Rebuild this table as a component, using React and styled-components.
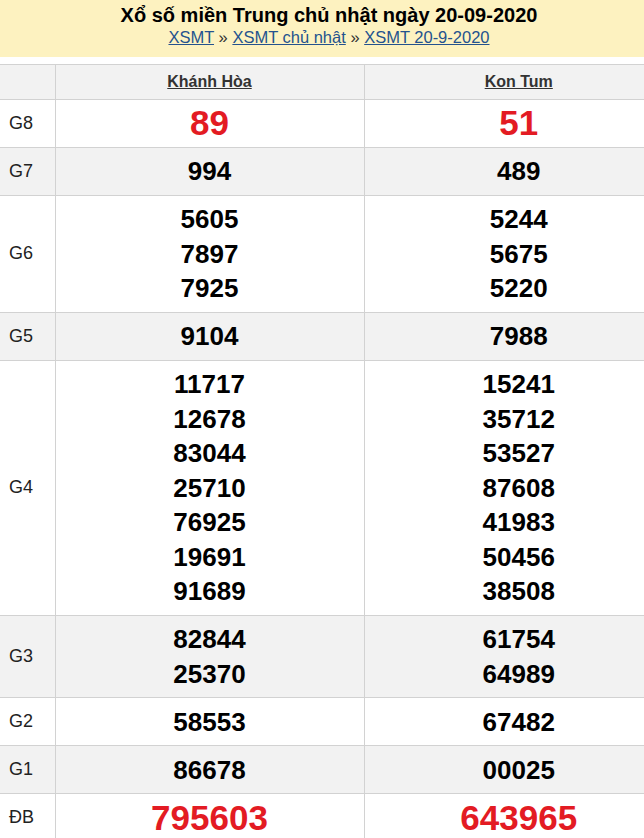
import React from "react";
import styled, { createGlobalStyle } from "styled-components";

const Global = createGlobalStyle`
  html, body { margin: 0; padding: 0; background: #fff; overflow: hidden; }
  body { font-family: Arial, "Liberation Sans", sans-serif; }
`;

const Page = styled.div`
  width: 673px;
`;

const Header = styled.header`
  width: 658px;
  height: 57px;
  box-sizing: border-box;
  background: #fdf2c0;
  text-align: center;
  padding-top: 3px;
`;

const Title = styled.h1`
  margin: 0;
  font-size: 20px;
  line-height: 25px;
  font-weight: bold;
  color: #000;
`;

const Crumbs = styled.div`
  font-size: 16.5px;
  line-height: 19px;
  color: #333;
`;

const Crumb = styled.a`
  color: #24528e;
  text-decoration: underline;
`;

const Table = styled.table`
  margin-top: 7px;
  width: 673px;
  border-collapse: collapse;
  table-layout: fixed;
`;

const Row = styled.tr`
  background: ${(p) => (p.$shaded ? "#f2f2f2" : "#fff")};
  border-top: 1px solid #d2d2d2;
  border-bottom: 1px solid #d2d2d2;
`;

const HeadCell = styled.th`
  border-left: 1px solid #d2d2d2;
  padding: 6.5px 0 7px;
  font-size: 16px;
  line-height: 20px;
  font-weight: bold;
  color: #333;
  text-align: center;
  &:first-child { border-left: none; }
`;

const HeadLink = styled.a`
  color: #333;
  text-decoration: underline;
`;

const Label = styled.td`
  width: 55px;
  box-sizing: border-box;
  padding: 0 0 0 9px;
  font-size: 18px;
  color: #222;
  vertical-align: middle;
`;

const Cell = styled.td`
  border-left: 1px solid #d2d2d2;
  padding: 6.5px 0 6px;
  text-align: center;
  vertical-align: middle;
`;

const Num = styled.div`
  font-size: ${(p) => (p.$big ? "35px" : "26px")};
  line-height: 34.5px;
  font-weight: bold;
  color: ${(p) => (p.$big ? "#e31b23" : "#000")};
`;

const rows = [
  ["G8", ["89"], ["51"], true],
  ["G7", ["994"], ["489"]],
  ["G6", ["5605", "7897", "7925"], ["5244", "5675", "5220"]],
  ["G5", ["9104"], ["7988"]],
  [
    "G4",
    ["11717", "12678", "83044", "25710", "76925", "19691", "91689"],
    ["15241", "35712", "53527", "87608", "41983", "50456", "38508"],
  ],
  ["G3", ["82844", "25370"], ["61754", "64989"]],
  ["G2", ["58553"], ["67482"]],
  ["G1", ["86678"], ["00025"]],
  ["ĐB", ["795603"], ["643965"], true],
];

export default function App() {
  return (
    <Page>
      <Global />
      <Header>
        <Title>Xổ số miền Trung chủ nhật ngày 20-09-2020</Title>
        <Crumbs>
          <Crumb href="#">XSMT</Crumb> » <Crumb href="#">XSMT chủ nhật</Crumb> »{" "}
          <Crumb href="#">XSMT 20-9-2020</Crumb>
        </Crumbs>
      </Header>
      <Table>
        <colgroup>
          <col style={{ width: 55 }} />
          <col style={{ width: 309 }} />
          <col style={{ width: 309 }} />
        </colgroup>
        <tbody>
          <Row $shaded>
            <HeadCell />
            <HeadCell>
              <HeadLink href="#">Khánh Hòa</HeadLink>
            </HeadCell>
            <HeadCell>
              <HeadLink href="#">Kon Tum</HeadLink>
            </HeadCell>
          </Row>
          {rows.map(([label, a, b, big], i) => (
            <Row key={label} $shaded={i % 2 === 1}>
              <Label>{label}</Label>
              <Cell>
                {a.map((n, j) => (
                  <Num key={j} $big={big}>
                    {n}
                  </Num>
                ))}
              </Cell>
              <Cell>
                {b.map((n, j) => (
                  <Num key={j} $big={big}>
                    {n}
                  </Num>
                ))}
              </Cell>
            </Row>
          ))}
        </tbody>
      </Table>
    </Page>
  );
}
